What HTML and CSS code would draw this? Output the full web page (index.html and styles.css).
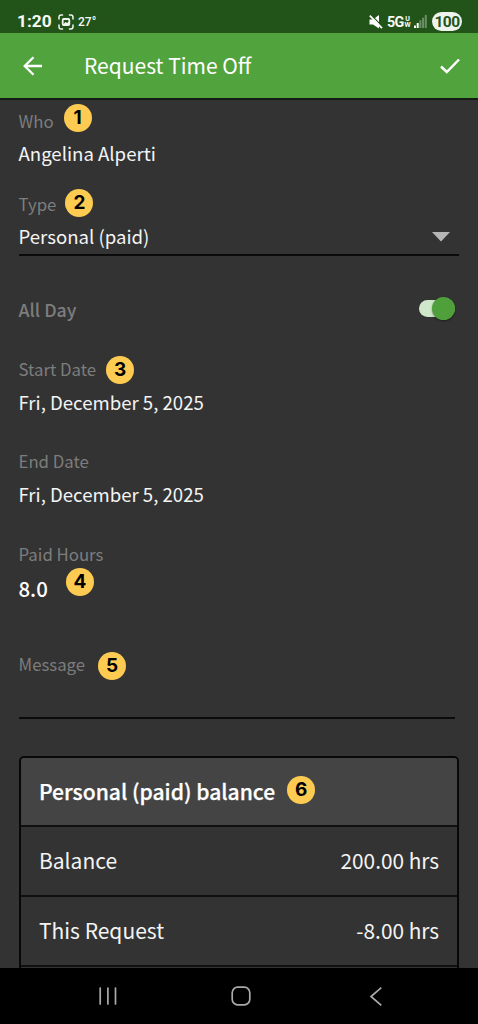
FILE: index.html
```html
<!DOCTYPE html>
<html lang="en">
<head>
<meta charset="utf-8">
<title>Request Time Off</title>
<link rel="stylesheet" href="styles.css">
</head>
<body>
<div class="screen">
  <div class="status">
    <span class="clock">1:20</span>
    <svg class="shot" width="16" height="16" viewBox="0 0 16 16" fill="none" stroke="#f2f5f1" stroke-width="1.5" stroke-linecap="round"><path d="M1 5V3.200Q1 1 3.200 1H4.500M11.500 1H12.800Q15 1 15 3.200V5M15 11V12.800Q15 15 12.800 15H11.500M4.500 15H3.200Q1 15 1 12.800V11"/><rect x="4.700" y="5" width="6.600" height="6" rx="1" stroke-width="1.800"/><path d="M5 10.500L7.500 8L9 9L11 7.500V11H5Z" fill="#f2f5f1" stroke="none"/></svg>
    <span class="temp">27°</span>
    <svg class="mute" width="14" height="14" viewBox="0 0 14 14"><path d="M.5 4.500H4L10 0V13.500L4 9.500H.5Z" fill="#fff"/><path d="M2.200 0L14 12" stroke="#225419" stroke-width="1.200"/><path d="M.8.600L13 13.200" stroke="#fff" stroke-width="1.700"/></svg>
    <span class="net">5G</span>
    <span class="uw"><span>U</span><span>W</span></span>
    <svg class="signal" width="13" height="13" viewBox="0 0 13 13"><path d="M0 10.500H2V13H0ZM2.700 8H4.700V13H2.700Z" fill="#fff"/><path d="M5.400 5.300H7.400V13H5.400ZM8.100 2.700H10.100V13H8.100ZM10.800 0H12.800V13H10.800Z" fill="#6c8f66"/></svg>
    <span class="battery">100</span>
  </div>
  <header class="appbar">
    <svg class="back" width="20" height="20" viewBox="0 0 20 20" fill="none" stroke="#fff" stroke-width="2.300"><path d="M19 10H2M10.500 1.200L1.700 10L10.500 18.800"/></svg>
    <h1 class="title">Request Time Off</h1>
    <svg class="check" width="20" height="16" viewBox="0 0 20 16" fill="none" stroke="#fff" stroke-width="2.500"><path d="M1 8.500L6.800 14L19 1.500"/></svg>
  </header>
  <main class="form">
    <section class="field who"><div class="label"><span>Who</span><b class="badge">1</b></div><div class="value">Angelina Alperti</div></section>
    <section class="field type"><div class="label"><span>Type</span><b class="badge">2</b></div><div class="value select"><span>Personal (paid)</span><svg width="18" height="10" viewBox="0 0 18 10"><path d="M0 0H18L9 9.500Z" fill="#b5b5b5"/></svg></div></section>
    <section class="allday"><span>All Day</span><span class="switch"><i class="knob"></i></span></section>
    <section class="field start"><div class="label"><span>Start Date</span><b class="badge">3</b></div><div class="value">Fri, December 5, 2025</div></section>
    <section class="field end"><div class="label"><span>End Date</span></div><div class="value">Fri, December 5, 2025</div></section>
    <section class="field hours"><div class="label"><span>Paid Hours</span></div><div class="value amount"><span class="number">8.0</span><b class="badge">4</b></div></section>
    <section class="field message"><div class="label"><span>Message</span><b class="badge">5</b></div></section>
    <section class="card">
      <div class="row head"><span>Personal (paid) balance</span><b class="badge">6</b></div>
      <div class="row"><span>Balance</span><span class="sum">200.00 hrs</span></div>
      <div class="row"><span>This Request</span><span class="sum">-8.00 hrs</span></div>
      <div class="row"></div>
    </section>
  </main>
  <nav class="nav">
    <svg width="18" height="18" viewBox="0 0 18 18" stroke="#aaa" stroke-width="1.700" stroke-linecap="round"><path d="M1.200 1V17M8.900 1V17M16.500 1V17"/></svg>
    <svg class="home" width="20" height="20" viewBox="0 0 20 20" fill="none" stroke="#aaa" stroke-width="1.700"><rect x="1.200" y="1.200" width="17.600" height="17.600" rx="5.500"/></svg>
    <svg width="12" height="19" viewBox="0 0 12 19" fill="none" stroke="#aaa" stroke-width="1.700"><path d="M11.300.7L1 9.500L11.300 18.300"/></svg>
  </nav>
</div>
</body>
</html>
```
FILE: styles.css
```css
* { box-sizing: border-box; }
body { margin: 0; background: #000; font-family: "Noto Sans CJK SC", "Noto Sans", sans-serif; color: #f4f4f4; }
svg { display: block; flex: none; }
span { white-space: nowrap; }
.screen { width: 478px; height: 1024px; overflow: hidden; display: flex; flex-direction: column; background: #333; }

.status { height: 33px; flex: none; display: flex; align-items: center; padding: 10px 16px 0 17px; background: #225419; color: #f7faf6; font-family: Roboto, sans-serif; }
.clock { width: 34px; font-size: 17.3px; font-weight: 700; line-height: 22px; margin-top: -2px; }
.shot { margin-left: 7px; }
.temp { margin-left: 4px; font-size: 12px; font-weight: 500; line-height: 22px; }
.mute { margin-left: auto; }
.net { margin-left: 4px; width: 17px; font-size: 14.3px; font-weight: 700; line-height: 22px; letter-spacing: -.6px; }
.uw { width: 7px; display: flex; flex-direction: column; align-items: center; font-size: 7px; font-weight: 700; line-height: 6px; }
.signal { margin-left: 3px; }
.battery { margin-left: 5px; width: 30px; height: 19px; border-radius: 10px; background: #eef3ed; color: #225419; text-align: center; font-size: 15.5px; line-height: 20px; font-weight: 700; letter-spacing: -.6px; }

.appbar { height: 67px; flex: none; display: flex; align-items: center; padding: 0 18px 0 23px; background: #51a33d; border-bottom: 2px solid #161a14; }
.title { margin: -1px 0 0 41px; font-size: 21px; font-weight: 400; line-height: 32px; white-space: nowrap; color: #fff; }
.check { margin-left: auto; }

.form { flex: 1; min-height: 0; overflow: hidden; padding: 6px 19px 0 18.5px; }
.label { height: 28px; line-height: 28px; display: flex; align-items: center; font-size: 16.8px; color: #7d7d7d; }
.label > span { padding-top: 2px; }
.value { height: 38px; line-height: 38px; font-size: 18.6px; white-space: nowrap; }
.badge { width: 28px; height: 28px; flex: none; border-radius: 50%; background: #fdcb52; color: #000; font: 700 19px/28px Inter, sans-serif; text-align: center; }
.who .badge { margin: -4px 0 0 10px; }
.type { margin-top: 17px; border-bottom: 2px solid #0b0b0b; height: 67px; }
.type .badge { margin: -1px 0 0 9px; }
.select { display: flex; justify-content: space-between; padding-right: 9px; align-items: center; }
.select svg { margin-top: 2px; }
.allday { height: 36px; margin-top: 35px; padding-right: 4px; display: flex; align-items: center; justify-content: space-between; font-size: 17.8px; font-weight: 500; color: #7d7d7d; }
.switch { width: 36px; height: 17px; margin-top: -1px; border-radius: 9px; background: #cfe8ca; display: flex; align-items: center; justify-content: flex-end; }
.knob { width: 23px; height: 23px; flex: none; border-radius: 50%; background: #4f9f3b; box-shadow: 0 1px 2px rgba(0,0,0,.4); }
.start { margin-top: 28px; }
.start .label > span, .end .label > span { padding-top: 0; }
.start .badge { margin: 1px 0 0 10px; }
.end, .hours { margin-top: 26px; }
.hours .label > span { padding-top: 1px; }
.amount { display: flex; font-weight: 500; color: #fff; }
.number { font-size: 20.4px; padding-top: 2px; }
.amount .badge { margin: 1px 0 0 18px; }
.message { margin-top: 45px; margin-right: 4px; height: 69px; border-bottom: 2px solid #0b0b0b; }
.message .label > span { padding-top: 0; }
.message .badge { margin: 3px 0 0 13px; }
.card { margin-top: 37px; border: 2px solid #080808; border-radius: 5px 5px 0 0; overflow: hidden; }
.row { height: 70px; display: flex; align-items: center; justify-content: space-between; padding: 0 18px 2px 18.5px; border-bottom: 2px solid #101010; font-size: 21px; line-height: 30px; }
.sum { font-size: 20.8px; }
.head { height: 69px; justify-content: flex-start; background: #444; font-weight: 500; font-size: 21.1px; color: #fff; -webkit-text-stroke: .25px #fff; }
.head .badge { margin: -2px 0 0 12px; -webkit-text-stroke: 0; }

.nav { height: 56px; flex: none; display: flex; align-items: center; justify-content: space-between; padding: 0 96px 0 99px; background: #000; }
.home { margin-right: 5px; }
```
